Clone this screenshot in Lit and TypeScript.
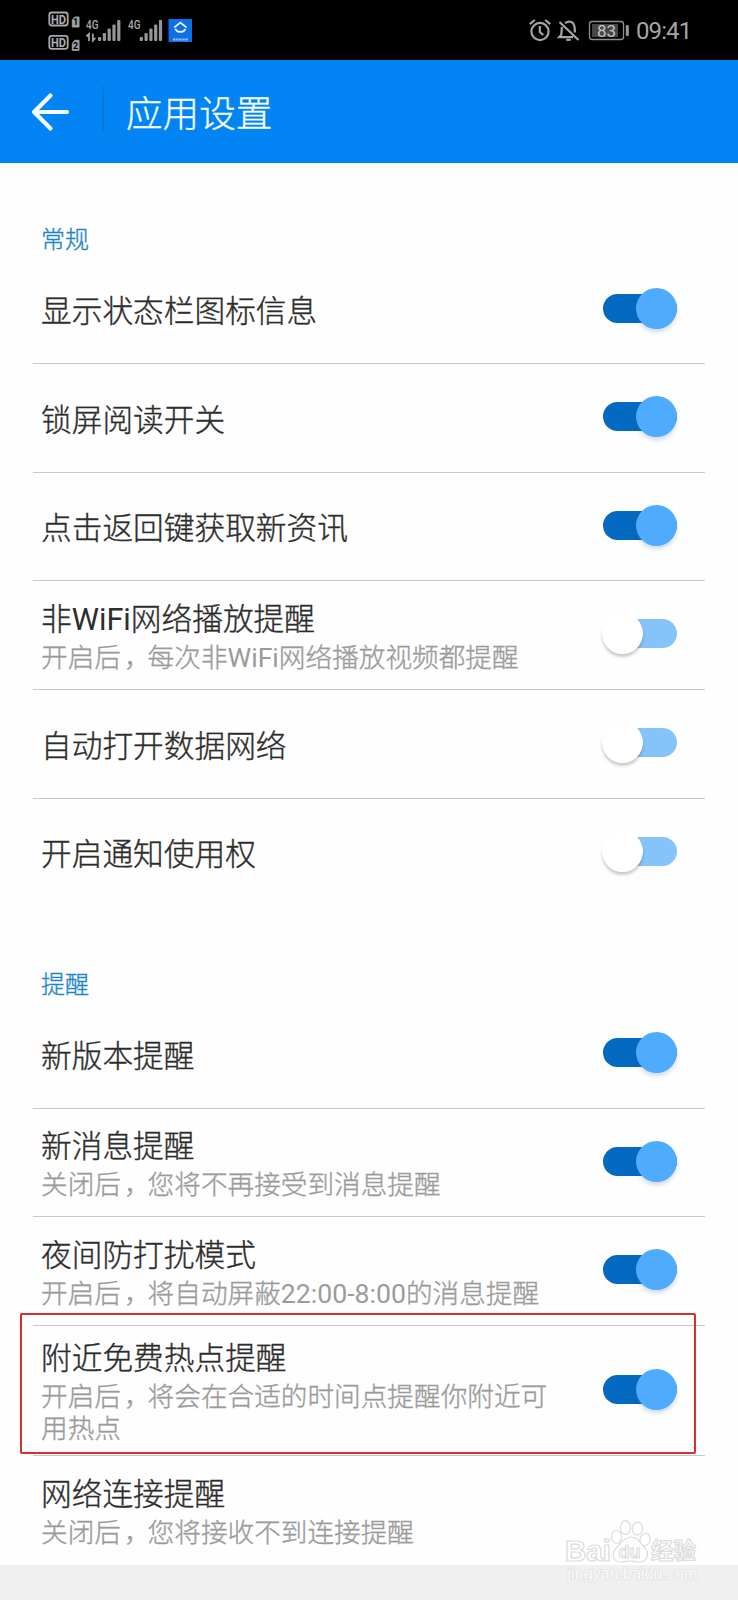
import { LitElement, html, css, svg, nothing } from "lit";
import { customElement, property } from "lit/decorators.js";
import { classMap } from "lit/directives/class-map.js";

interface Setting {
  title: string;
  note?: string;
  on: boolean;
  marked?: boolean;
}

interface Group {
  name: string;
  items: Setting[];
}

const GROUPS: Group[] = [
  {
    name: "常规",
    items: [
      { title: "显示状态栏图标信息", on: true },
      { title: "锁屏阅读开关", on: true },
      { title: "点击返回键获取新资讯", on: true },
      { title: "非WiFi网络播放提醒", note: "开启后，每次非WiFi网络播放视频都提醒", on: false },
      { title: "自动打开数据网络", on: false },
      { title: "开启通知使用权", on: false },
    ],
  },
  {
    name: "提醒",
    items: [
      { title: "新版本提醒", on: true },
      { title: "新消息提醒", note: "关闭后，您将不再接受到消息提醒", on: true },
      { title: "夜间防打扰模式", note: "开启后，将自动屏蔽22:00-8:00的消息提醒", on: true },
      { title: "附近免费热点提醒", note: "开启后，将会在合适的时间点提醒你附近可用热点", on: true, marked: true },
    ],
  },
];

// Latin runs and full-width commas carry their own weight and spacing.
const typeset = (text: string) =>
  text
    .split(/([A-Za-z0-9:\-]+|，)/)
    .map((part, i) => (i % 2 ? html`<span class=${part === "，" ? "comma" : "latin"}>${part}</span>` : part));

const runStyles = css`
  .latin { font-weight: 400; -webkit-text-stroke: 0; }
  .comma { padding-left: 3px; letter-spacing: -3px; }
`;

@customElement("toggle-switch")
class ToggleSwitch extends LitElement {
  @property({ type: Boolean }) on = false;

  static styles = css`
    :host { display: block; flex: none; }
    .track {
      display: flex;
      align-items: center;
      width: 74px;
      height: 29px;
      border-radius: 15px;
      background: #85c3fb;
    }
    .thumb {
      width: 41px;
      height: 41px;
      flex: none;
      margin-left: -1px;
      border-radius: 50%;
      background: #fff;
      box-shadow: 0 3px 3px rgba(0, 0, 0, 0.2);
    }
    .on { background: #0469c1; justify-content: flex-end; }
    .on .thumb { background: #4eabfd; margin-right: -0.5px; box-shadow: 0 3px 4px rgba(60, 90, 150, 0.22); }
  `;

  render() {
    return html`<div class=${classMap({ track: true, on: this.on })}><div class="thumb"></div></div>`;
  }
}

@customElement("status-bar")
class StatusBar extends LitElement {
  static styles = css`
    :host {
      display: flex;
      justify-content: space-between;
      height: 60px;
      background: #000;
      color: #a6a6a6;
      font-family: Roboto, sans-serif;
    }
    .left { display: block; margin-left: 40px; }
    .right { display: flex; padding: 0 46px 0 0; }
    .clock { font-size: 24px; line-height: 63px; letter-spacing: -0.9px; width: 56px; white-space: nowrap; font-weight: 400; }
    text { font-family: Roboto, sans-serif; fill: #a6a6a6; }
    .hd { font-size: 13px; font-weight: 700; fill: #b0b0b0; }
    .net { font-size: 12.5px; font-weight: 500; }
    .sim { font-size: 9px; font-weight: 700; fill: #000; }
    .pct { font-size: 17px; font-weight: 400; fill: #c4c4c4; }
  `;

  private bars(x: number) {
    return [0, 1, 2, 3, 4].map(
      (i) => svg`<rect x=${x + i * 4.8} y=${[37, 33, 28.5, 24.5, 20][i]} width="3.2" height=${[4, 8, 12.5, 16.5, 21][i]} rx="1" fill="#979797"/>`,
    );
  }

  private sim(y: number, n: number) {
    return svg`
      <rect x="9.3" y=${y} width="18.4" height="13" rx="2.5" fill="none" stroke="#a8a8a8" stroke-width="1.8"/>
      <text class="hd" x="11" y=${y + 11} textLength="15" lengthAdjust="spacingAndGlyphs">HD</text>
      <path d="M32.3 ${y + 7.5}l2.5-3h4.2v10h-6.7z" fill="#a0a0a0" stroke="#a0a0a0"/>
      <text class="sim" x="33.1" y=${y + 12.8}>${n}</text>`;
  }

  render() {
    return html`
      <svg class="left" width="160" height="60" viewBox="0 0 160 60">
        ${this.sim(12.5, 1)} ${this.sim(35.8, 2)}
        <text class="net" x="46" y="29" textLength="12.5" lengthAdjust="spacingAndGlyphs">4G</text>
        <path d="M46.5 36.5l2.5-2.5v7M52.8 33.5v7l2.5-2.5" fill="none" stroke="#a0a0a0" stroke-width="1.8"/>
        ${this.bars(58)}
        <text class="net" x="88" y="29" textLength="12.5" lengthAdjust="spacingAndGlyphs">4G</text>
        ${this.bars(99.7)}
        <rect x="128.5" y="19" width="23.5" height="23" fill="#0e6fe6"/>
        <path d="M134.2 27.5l6.2-5 6.2 5M135.3 28.8c1.8 4.2 8.4 4.2 10.2 0" fill="none" stroke="#e8f4ff" stroke-width="1.7"/>
        <path d="M133 39.5h15" stroke="#8fc2ff" stroke-width="1.8" stroke-dasharray="2.5 .6"/>
      </svg>
      <div class="right">
        <svg width="108" height="60" viewBox="0 0 108 60">
          <g fill="none" stroke="#a6a6a6" stroke-width="2.2">
            <circle cx="12" cy="31.5" r="8.6"/>
            <path d="M11.8 26v6l3.5 3M1.8 24.2l5-4.2M17.2 20l5 4.2"/>
            <path d="M31.5 22l19 18"/>
            <path d="M34 27c-.6 2-.2 5.5-.8 8l-2 2.2h14"/>
            <path d="M37 23l3.5-1.5c5.5 0 6.5 4 6.3 11"/>
            <path d="M38.2 39.8h4.5"/>
            <rect x="61.5" y="21.5" width="34" height="18" rx="2.5" stroke="#8d8d8d" stroke-width="1.3"/>
          </g>
          <rect x="64" y="24" width="26" height="13" fill="#454545"/>
          <rect x="97.8" y="25" width="3" height="11" rx="1" fill="#979797"/>
          <text class="pct" x="69" y="36.5">83</text>
        </svg>
        <div class="clock">09:41</div>
      </div>`;
  }
}

@customElement("setting-row")
class SettingRow extends LitElement {
  @property({ attribute: false }) item!: Setting;

  static styles = [
    runStyles,
    css`
      :host { display: block; position: relative; }
      .row {
        display: flex;
        align-items: center;
        justify-content: space-between;
        box-sizing: border-box;
        min-height: 108.6px;
        padding: 0 28.5px 0 8px;
      }
      .row.tall { min-height: 130px; }
      .copy { width: 514px; padding-top: 1px; }
      .single { padding-top: 5.5px; }
      .title { font-size: 30.7px; line-height: 45px; color: #2d2d2d; white-space: nowrap; }
      .note { font-size: 26.65px; line-height: 32px; color: #9b9b9b; }
      toggle-switch { margin-bottom: 1.8px; }
      .mark {
        position: absolute;
        left: -13px;
        top: -12px;
        width: 672px;
        height: 137px;
        border: 2px solid #d62f2c;
        border-radius: 2px;
        z-index: 1;
      }
    `,
  ];

  render() {
    const { title, note, on, marked } = this.item;
    return html`
      <div class=${classMap({ row: true, tall: !!marked })}>
        <div class=${classMap({ copy: true, single: !note })}>
          <div class="title">${typeset(title)}</div>
          ${note ? html`<div class="note">${typeset(note)}</div>` : nothing}
        </div>
        <toggle-switch ?on=${on}></toggle-switch>
      </div>
      ${marked ? html`<div class="mark"></div>` : nothing}`;
  }
}

@customElement("app-root")
class AppRoot extends LitElement {
  static styles = [
    runStyles,
    css`
      :host {
        display: block;
        position: relative;
        width: 738px;
        height: 1600px;
        overflow: hidden;
        background: #fefefe;
        font-family: Roboto, "Noto Sans CJK SC", sans-serif;
        font-weight: 300;
        -webkit-text-stroke: 0.35px currentColor;
      }
      status-bar, .logo { -webkit-text-stroke: 0; }
      .bar {
        display: flex;
        align-items: center;
        height: 102.5px;
        background: #0284f4;
        color: #f4fdff;
      }
      .back { margin: 2px 0 0 31px; }
      .split { width: 2px; height: 44px; margin: 0 22px 4px 31px; background: #0474da; }
      .heading { font-size: 36.6px; line-height: 50px; margin-top: 7px; }
      .list { padding: 0 33px 0 33px; }
      .group {
        box-sizing: border-box;
        height: 92.2px;
        padding: 61.6px 0 0 8px;
        font-size: 24px;
        line-height: 32px;
        color: #1c86c8;
      }
      .group.later { height: 93px; padding-top: 63px; }
      .line { border-top: 1px solid #c9c9c9; height: 0; margin-bottom: -1px; }
      .last {
        display: flex;
        flex-direction: column;
        justify-content: center;
        height: 109.5px;
        box-sizing: border-box;
        padding: 1px 0 0 8px;
        font-size: 30.7px;
        line-height: 45px;
        color: #2d2d2d;
      }
      .last-note { font-size: 26.65px; line-height: 32px; color: #9b9b9b; }
      .foot { height: 40px; background: #f0f0f0; }
      .logo { position: absolute; left: 560px; top: 1514px; z-index: 2; }
      .logo text { font-family: "Liberation Sans", "Noto Sans CJK SC", sans-serif; font-weight: 700; }
      .logo .url { font-weight: 400; stroke-width: 1.2; paint-order: stroke; fill: #fcfcfc; }
    `,
  ];

  render() {
    return html`
      <status-bar></status-bar>
      <header class="bar">
        <svg class="back" width="40" height="44" viewBox="0 0 40 44" fill="none" stroke="#f4fdff" stroke-width="4.2" stroke-linecap="round" stroke-linejoin="round">
          <path d="M36 22H3M19.5 5.5L3 22l16.5 16.5"/>
        </svg>
        <div class="split"></div>
        <div class="heading">应用设置</div>
      </header>
      <main class="list">
        ${GROUPS.map(
          (g, gi) => html`
            <div class=${classMap({ group: true, later: gi > 0 })}>${g.name}</div>
            ${g.items.map(
              (item, i) => html`${i ? html`<div class="line"></div>` : nothing}<setting-row .item=${item}></setting-row>`,
            )}
            ${gi ? html`<div class="line"></div>` : nothing}`,
        )}
        <div class="last">
          <div>网络连接提醒</div>
          <div class="last-note">${typeset("关闭后，您将接收不到连接提醒")}</div>
        </div>
      </main>
      <footer class="foot"></footer>
      <svg class="logo" width="150" height="74" viewBox="0 0 150 74" fill="#fff" stroke="#dcdcdc" stroke-width="1.2">
        <text x="5" y="46.5" font-size="29" textLength="46" lengthAdjust="spacingAndGlyphs">Bai</text>
        <ellipse cx="56.5" cy="23" rx="5" ry="6.5"/>
        <ellipse cx="65.5" cy="13.5" rx="5" ry="6.8"/>
        <ellipse cx="77.5" cy="14.5" rx="5" ry="6.5" transform="rotate(12 77.5 14.5)"/>
        <ellipse cx="85" cy="25.5" rx="5" ry="6.3" transform="rotate(15 85 25.5)"/>
        <path d="M71 23c7 0 9 6 13 10 6 6 4 15-5 15-4 0-6-1-9-1s-5 1-9 1c-9 0-10-9-4-15 5-4 7-10 14-10z"/>
        <text x="58.5" y="44" font-size="19" textLength="22" lengthAdjust="spacingAndGlyphs">du</text>
        <text x="91" y="45" font-size="23" textLength="45" lengthAdjust="spacingAndGlyphs">经验</text>
        <text class="url" x="7.5" y="64.5" font-size="16" textLength="130" lengthAdjust="spacingAndGlyphs">jingyan.baidu.com</text>
      </svg>`;
  }
}
